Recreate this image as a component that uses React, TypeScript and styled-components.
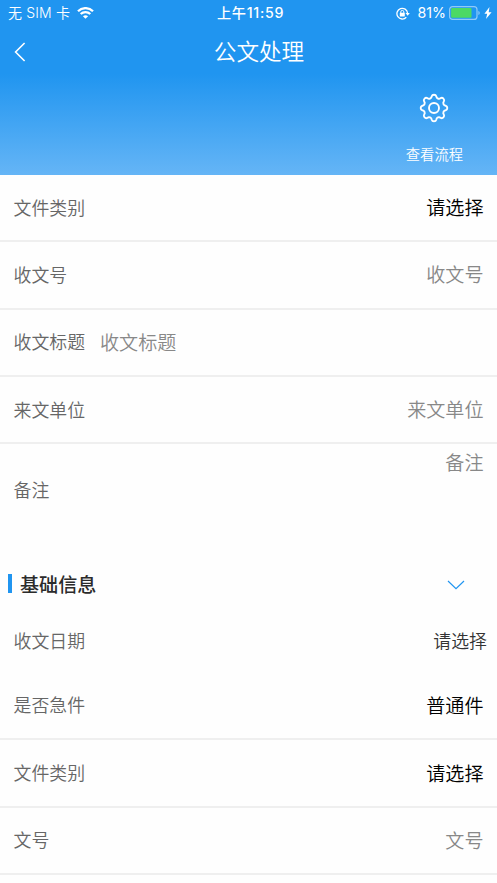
import React from 'react';
import styled, { createGlobalStyle } from 'styled-components';

const GlobalStyle = createGlobalStyle`
  *, *::before, *::after { box-sizing: border-box; }
  html, body { margin: 0; padding: 0; background: #fff; }
  body {
    font-family: Inter, "Noto Sans CJK SC", sans-serif;
    overflow: hidden;
  }
`;

const Screen = styled.main`
  width: 497px;
  height: 883px;
  overflow: hidden;
  background: #fefefe;
`;

const Header = styled.header`
  height: 175px;
  color: #fff;
  background: linear-gradient(180deg, #2095f0 0, #2095f0 74px, #65b5f6 175px);
`;

const StatusBar = styled.div`
  display: grid;
  grid-template-columns: 1fr auto 1fr;
  align-items: center;
  height: 26px;
  padding: 0 5px 0 8px;
  font-size: 14px;
  font-weight: 400;
  line-height: 26px;
`;

const StatusGroup = styled.div<{ $end?: boolean }>`
  display: flex;
  align-items: center;
  justify-content: ${(p) => (p.$end ? 'flex-end' : 'flex-start')};
  white-space: pre;
`;

const Carrier = styled.span`
  margin-right: 7px;
  font-weight: 350;
  letter-spacing: 0.15px;
`;

const Clock = styled.time`
  padding-left: 1px;
  font-size: 14.2px;
  font-weight: 500;
  letter-spacing: 0.7px;
`;

const Percent = styled.span`
  margin: 0 3px 0 8px;
  font-size: 14.2px;
`;

const NavBar = styled.nav`
  display: grid;
  grid-template-columns: 40px 1fr 40px;
  align-items: center;
  height: 50px;
`;

const BackButton = styled.button`
  display: flex;
  padding: 0 0 0 13px;
  border: 0;
  background: none;
  color: inherit;
`;

const Title = styled.h1`
  margin: 0;
  padding: 1px 0 0 21px;
  text-align: center;
  font-size: 22.6px;
  font-weight: 350;
  line-height: 50px;
`;

const Tools = styled.div`
  display: flex;
  justify-content: flex-end;
  padding: 17px 34px 0 0;
`;

const ToolButton = styled.button`
  display: flex;
  flex-direction: column;
  align-items: center;
  gap: 19px;
  padding: 0;
  border: 0;
  background: none;
  color: inherit;
  font: 350 14.3px/24px "Noto Sans CJK SC", sans-serif;
`;

const Row = styled.div<{ $height?: number; $plain?: boolean }>`
  display: flex;
  align-items: center;
  justify-content: space-between;
  height: ${(p) => p.$height ?? 67.4}px;
  padding: 1px 13.5px 0;
  border-bottom: ${(p) => (p.$plain ? '0' : '2px solid #efefef')};
`;

const Label = styled.label`
  width: 86.5px;
  padding-top: 1px;
  color: #666;
  font-size: 17.9px;
  font-weight: 350;
  line-height: 28px;
  white-space: nowrap;
`;

type Tone = 'value' | 'placeholder' | 'date';
const toneColor: Record<Tone, string> = { value: '#000', placeholder: '#888', date: '#333' };

const Value = styled.div<{ $tone: Tone; $left?: boolean; $top?: boolean }>`
  flex: 1;
  align-self: ${(p) => (p.$top ? 'flex-start' : 'center')};
  margin-top: ${(p) => (p.$top ? 4 : 0)}px;
  margin-right: ${(p) => (p.$tone === 'date' ? -3.5 : 0)}px;
  color: ${(p) => toneColor[p.$tone]};
  font-size: ${(p) => (p.$tone === 'date' ? 17.9 : 19.1)}px;
  font-weight: 350;
  line-height: 28px;
  text-align: ${(p) => (p.$left ? 'left' : 'right')};
`;

const SectionHeader = styled.div`
  display: flex;
  align-items: center;
  height: 54px;
  margin-top: 20px;
  padding: 0 32px 0 8px;
`;

const Marker = styled.span`
  width: 4px;
  height: 19px;
  margin-right: 8px;
  background: #2095f0;
`;

const SectionTitle = styled.h2`
  flex: 1;
  margin: 0;
  padding-top: 3px;
  color: #2b2b2b;
  font-size: 19.1px;
  font-weight: 500;
  line-height: 28px;
`;

const WifiIcon = () => (
  <svg width="17" height="13" viewBox="0 0 17 13" fill="none" stroke="#fff" strokeWidth="2.3">
    <path d="M1 4.2C5.2.1 11.8.1 16 4.2M3.7 7c2.7-2.6 6.9-2.6 9.6 0" />
    <path d="M5.9 9.2c1.5-1.4 3.7-1.4 5.2 0L8.5 11.8Z" fill="#fff" stroke="none" />
  </svg>
);

const RotationLockIcon = () => (
  <svg width="14" height="13" viewBox="0 0 14 13" fill="none" stroke="#fff">
    <path d="M10.3 10.2A5.35 5.35 0 1 1 11.6 6.2" strokeWidth="1.3" />
    <path d="M9.5 6h4.3l-2.1 2.7Z" fill="#fff" stroke="none" />
    <rect x="3.8" y="5.7" width="5" height="3.8" rx=".4" fill="#fff" stroke="none" />
    <path d="M4.8 6V4.9a1.5 1.5 0 0 1 3 0V6" strokeWidth="1" />
  </svg>
);

const Battery = styled.svg`
  margin-right: 3px;
`;

const BatteryIcon = () => (
  <Battery width="32" height="14" viewBox="0 0 32 14" fill="none">
    <rect x=".6" y=".6" width="27.4" height="12.8" rx="3" stroke="#fff" strokeOpacity=".5" strokeWidth="1.2" />
    <rect x="2.1" y="2.1" width="20.4" height="9.6" rx="1" fill="#4cd964" />
    <path d="M29.4 4.7c1.8.7 1.8 3.7 0 4.4Z" fill="#fff" fillOpacity=".5" />
  </Battery>
);

const BoltIcon = () => (
  <svg width="8" height="12" viewBox="0 0 8 12">
    <path d="M5.5.1.4 6.7h2.8L2 11.9 7.6 5.2H4.7Z" fill="#fff" />
  </svg>
);

const BackIcon = () => (
  <svg width="13" height="20" viewBox="0 0 13 20" fill="none" stroke="#fff" strokeWidth="1.6">
    <path d="M11.6 1 2.6 10l9 9" />
  </svg>
);

const ChevronIcon = styled.svg`
  margin-top: 3px;
`;

const ChevronDownIcon = () => (
  <ChevronIcon width="18" height="10" viewBox="0 0 18 10" fill="none" stroke="#2095f0" strokeWidth="1.2">
    <path d="M1 1l8 7.7L17 1" />
  </ChevronIcon>
);

/* Eight rounded teeth joined by scooped valleys. */
const gearPath = (() => {
  const at = (deg: number) => {
    const a = (deg * Math.PI) / 180;
    return `${(15 + 11.9 * Math.cos(a)).toFixed(2)} ${(15 + 11.9 * Math.sin(a)).toFixed(2)}`;
  };
  let d = `M${at(-11)}`;
  for (let i = 0; i < 8; i += 1) {
    d += `A2.35 2.2 ${i * 45 + 90} 0 1 ${at(i * 45 + 11)}`;
    d += `A2.7 2.7 0 0 0 ${at(i * 45 + 34)}`;
  }
  return `${d}Z`;
})();

const GearIcon = () => (
  <svg width="30" height="30" viewBox="0 0 30 30" fill="none" stroke="#fff" strokeWidth="1.9" strokeLinejoin="round">
    <path d={gearPath} />
    <circle cx="15" cy="15" r="5" />
  </svg>
);

interface Field {
  label: string;
  value: string;
  tone: Tone;
  left?: boolean;
  top?: boolean;
  height?: number;
  plain?: boolean;
}

const documentFields: Field[] = [
  { label: '文件类别', value: '请选择', tone: 'value', height: 67.2 },
  { label: '收文号', value: '收文号', tone: 'placeholder' },
  { label: '收文标题', value: '收文标题', tone: 'placeholder', left: true },
  { label: '来文单位', value: '来文单位', tone: 'placeholder' },
  { label: '备注', value: '备注', tone: 'placeholder', top: true, height: 92, plain: true },
];

const basicFields: Field[] = [
  { label: '收文日期', value: '请选择', tone: 'date', height: 62, plain: true },
  { label: '是否急件', value: '普通件', tone: 'value', height: 68 },
  { label: '文件类别', value: '请选择', tone: 'value' },
  { label: '文号', value: '文号', tone: 'placeholder' },
];

const FieldRow = ({ field }: { field: Field }) => (
  <Row $height={field.height} $plain={field.plain}>
    <Label>{field.label}</Label>
    <Value $tone={field.tone} $left={field.left} $top={field.top}>
      {field.value}
    </Value>
  </Row>
);

export default function App() {
  return (
    <>
      <GlobalStyle />
      <Screen>
        <Header>
          <StatusBar>
            <StatusGroup>
              <Carrier>无 SIM 卡</Carrier>
              <WifiIcon />
            </StatusGroup>
            <Clock>上午11:59</Clock>
            <StatusGroup $end>
              <RotationLockIcon />
              <Percent>81%</Percent>
              <BatteryIcon />
              <BoltIcon />
            </StatusGroup>
          </StatusBar>
          <NavBar>
            <BackButton aria-label="返回">
              <BackIcon />
            </BackButton>
            <Title>公文处理</Title>
          </NavBar>
          <Tools>
            <ToolButton>
              <GearIcon />
              查看流程
            </ToolButton>
          </Tools>
        </Header>
        {documentFields.map((field) => (
          <FieldRow key={field.label} field={field} />
        ))}
        <SectionHeader>
          <Marker />
          <SectionTitle>基础信息</SectionTitle>
          <ChevronDownIcon />
        </SectionHeader>
        {basicFields.map((field) => (
          <FieldRow key={field.label} field={field} />
        ))}
      </Screen>
    </>
  );
}
